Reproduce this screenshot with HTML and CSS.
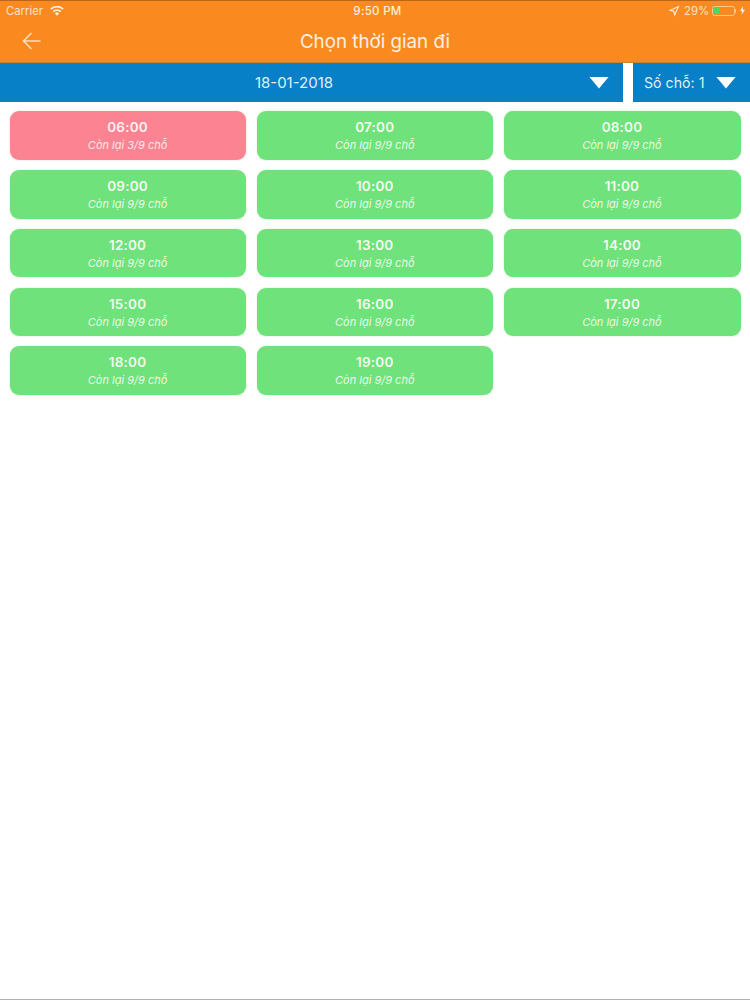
FILE: index.html
```html
<!DOCTYPE html>
<html lang="vi">
<head>
<meta charset="utf-8">
<title>Chọn thời gian đi</title>
<link rel="stylesheet" href="styles.css">
</head>
<body>
<div class="app">
  <header class="header">
    <div class="status">
      <div class="status-left">
        <span>Carrier</span>
        <svg class="wifi" width="14" height="10" viewBox="0 0 14 10"><path d="M7 9.800 4.900 7.400a3 3 0 0 1 4.200 0zM3.800 6.200 2.600 4.900a6.400 6.400 0 0 1 8.800 0l-1.200 1.300a4.600 4.600 0 0 0-6.400 0zM1.500 3.700.3 2.400a9.800 9.800 0 0 1 13.400 0l-1.200 1.300a8 8 0 0 0-11 0z"/></svg>
      </div>
      <div class="status-time">9:50 PM</div>
      <div class="status-right">
        <svg class="loc" width="12" height="12" viewBox="0 0 12 12"><path d="M11.500.5 6.500 11.500 5.300 6.700.5 5.500zM9.300 2.700 3.800 5.100l2.500.6.600 2.500z" fill-rule="evenodd"/></svg>
        <span class="pct">29%</span>
        <span class="battery"><span class="battery-fill"></span></span>
        <span class="battery-tip"></span>
        <svg width="5" height="9" viewBox="0 0 5 9"><path d="M3 0 0 5h2L1.500 9 5 3.800H3z"/></svg>
      </div>
    </div>
    <div class="nav">
      <svg class="back" width="20" height="18" viewBox="0 0 20 18"><path d="M18.500 9H1.500M9.500 1 1.500 9l8 8"/></svg>
      <h1 class="title">Chọn thời gian đi</h1>
    </div>
  </header>
  <div class="filters">
    <div class="filter filter-date">
      <span class="date">18-01-2018</span>
      <span class="caret caret-date"></span>
    </div>
    <div class="filter filter-seat">
      <span>Số chỗ: 1</span>
      <span class="caret"></span>
    </div>
  </div>
  <main class="grid">
    <div class="slot slot-low"><strong>06:00</strong><em>Còn lại 3/9 chỗ</em></div>
    <div class="slot"><strong>07:00</strong><em>Còn lại 9/9 chỗ</em></div>
    <div class="slot"><strong>08:00</strong><em>Còn lại 9/9 chỗ</em></div>
    <div class="slot"><strong>09:00</strong><em>Còn lại 9/9 chỗ</em></div>
    <div class="slot"><strong>10:00</strong><em>Còn lại 9/9 chỗ</em></div>
    <div class="slot"><strong>11:00</strong><em>Còn lại 9/9 chỗ</em></div>
    <div class="slot"><strong>12:00</strong><em>Còn lại 9/9 chỗ</em></div>
    <div class="slot"><strong>13:00</strong><em>Còn lại 9/9 chỗ</em></div>
    <div class="slot"><strong>14:00</strong><em>Còn lại 9/9 chỗ</em></div>
    <div class="slot"><strong>15:00</strong><em>Còn lại 9/9 chỗ</em></div>
    <div class="slot"><strong>16:00</strong><em>Còn lại 9/9 chỗ</em></div>
    <div class="slot"><strong>17:00</strong><em>Còn lại 9/9 chỗ</em></div>
    <div class="slot"><strong>18:00</strong><em>Còn lại 9/9 chỗ</em></div>
    <div class="slot"><strong>19:00</strong><em>Còn lại 9/9 chỗ</em></div>
  </main>
</div>
</body>
</html>
```

FILE: styles.css
```css
* { box-sizing: border-box; }
html, body { margin: 0; padding: 0; height: 1000px; overflow: hidden; background: #fff; }
body { font-family: Inter, "Noto Sans", sans-serif; color: #fff; }
.app { height: 1000px; display: flex; flex-direction: column; border-bottom: 1px solid #b0b0b0; }

.header { height: 63px; background: #fa8a20; border-top: 1px solid #b8661a; border-bottom: 1px solid #c9832f; flex: none; }
.status { height: 19px; padding: 0 5px 0 6px; display: grid; grid-template-columns: 1fr auto 1fr; align-items: center; font-size: 11.300px; color: #fde3c6; }
.status-left { display: flex; align-items: center; gap: 7px; }
.status-time { margin-left: 4px; font-weight: 500; font-size: 11.500px; letter-spacing: .3px; color: #fdeede; }
.status-right { display: flex; align-items: center; justify-content: flex-end; }
.status svg { fill: #fdeede; }
.pct { margin-left: 4px; margin-right: 3px; }
.battery { width: 23px; height: 10px; border: 1px solid #fcc98f; border-radius: 2.500px; padding: 1px; display: flex; }
.battery-fill { width: 6px; background: #4cd964; border-radius: 1px; }
.battery-tip { width: 1px; height: 4px; background: #fcc98f; margin-right: 4px; }

.nav { height: 42px; display: flex; align-items: center; justify-content: center; position: relative; }
.back { position: absolute; left: 22px; top: 12px; fill: none; stroke: #fddcb8; stroke-width: 1.600; }
.title { margin: 0; font-size: 18.750px; font-weight: 400; color: #fdf0e2; }

.filters { height: 39px; display: flex; gap: 10px; flex: none; }
.filter { background: #0780c8; display: flex; align-items: center; font-size: 14.200px; color: #dff0fa; }
.filter-date { width: 623px; justify-content: center; position: relative; }
.date { font-size: 15px; margin-right: 35px; }
.caret-date { position: absolute; right: 14px; }
.filter-seat { flex: 1; padding: 0 14px 0 11px; justify-content: space-between; }
.caret { width: 20px; height: 12px; background: #fff; clip-path: polygon(0 0, 100% 0, 50% 100%); }

.grid { padding: 9.200px 0 0 10px; display: grid; grid-template-columns: repeat(3, 236.200px); column-gap: 11px; row-gap: 10.200px; }
.slot { height: 48.600px; border-radius: 9px; background: #6fe27b; display: flex; flex-direction: column; align-items: center; padding-top: 8px; padding-right: 1px; box-shadow: 0 0 2px rgba(111, 226, 123, .4); }
.slot-low { background: #fc8391; box-shadow: 0 0 2px rgba(252, 131, 145, .4); }
.slot strong { font-size: 13.500px; line-height: 17px; font-weight: 600; letter-spacing: .2px; color: #f2fbf0; }
.slot-low strong { color: #fff0f0; }
.slot em { font-size: 11px; line-height: 16px; font-style: italic; color: #e8fae6; margin-top: 1px; }
.slot-low em { color: #ffe8ea; }
```
